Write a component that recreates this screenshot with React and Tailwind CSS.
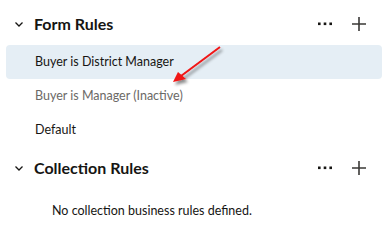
import React from "react";

const Chevron = () => (
    <svg width="10" height="10" viewBox="0 0 10 10" className="shrink-0">
        <path d="M1.5 3.5 L5 7 L8.5 3.5" fill="none" stroke="#161513" strokeWidth="1.3" />
    </svg>
);

const Dots = () => (
    <svg width="16" height="4" viewBox="0 0 16 4">
        <rect x="1" y="0.5" width="2.6" height="2.6" fill="#161513" />
        <rect x="6.7" y="0.5" width="2.6" height="2.6" fill="#161513" />
        <rect x="12.4" y="0.5" width="2.6" height="2.6" fill="#161513" />
    </svg>
);

const Plus = () => (
    <svg width="16" height="16" viewBox="0 0 16 16">
        <path d="M8 1 V15 M1 8 H15" stroke="#3a3936" strokeWidth="1.6" />
    </svg>
);

function SectionHeader({ title }) {
    return (
        <div className="flex items-center h-8 pl-[14px] pr-[21px]">
            <Chevron />
            <h2 className="ml-[10px] text-[16px] font-bold text-[#161513] flex-1">
                {title}
            </h2>
            <button className="w-6 flex justify-center mr-[14px]">
                <Dots />
            </button>
            <button className="flex justify-center">
                <Plus />
            </button>
        </div>
    );
}

const rules = [
    { name: "Buyer is District Manager", selected: true },
    { name: "Buyer is Manager (Inactive)", inactive: true },
    { name: "Default" },
];

export default function App() {
    return (
        <div
            className="relative w-[388px] h-[244px] bg-white overflow-hidden pt-2"
            style={{ fontFamily: 'Lato, "Noto Sans", sans-serif' }}
        >
            <SectionHeader title="Form Rules" />
            <ul className="mt-[5px] px-[6px]">
                {rules.map((r) => (
                    <li
                        key={r.name}
                        className={`h-[34px] flex items-center pl-[29px] rounded text-[12.5px] ${
                            r.selected ? "bg-[#e5eef5]" : ""
                        } ${r.inactive ? "text-[#6b6966]" : "text-[#161513]"}`}
                    >
                        {r.name}
                    </li>
                ))}
            </ul>
            <div className="mt-[5px]">
                <SectionHeader title="Collection Rules" />
            </div>
            <p className="mt-[18px] pl-[52px] text-[12.5px] text-[#161513]">
                No collection business rules defined.
            </p>

            {/* annotation arrow */}
            <svg
                className="absolute left-0 top-0 pointer-events-none"
                width="388"
                height="244"
            >
                <defs>
                    <filter id="sh" x="-50%" y="-50%" width="200%" height="200%">
                        <feDropShadow dx="2" dy="3" stdDeviation="1.5" floodColor="#000" floodOpacity="0.45" />
                    </filter>
                </defs>
                <g filter="url(#sh)">
                    <line x1="220" y1="47" x2="181" y2="76" stroke="#f01414" strokeWidth="2" />
                    <polygon points="173,82 178,72 186,79" fill="#f01414" />
                </g>
            </svg>
        </div>
    );
}
